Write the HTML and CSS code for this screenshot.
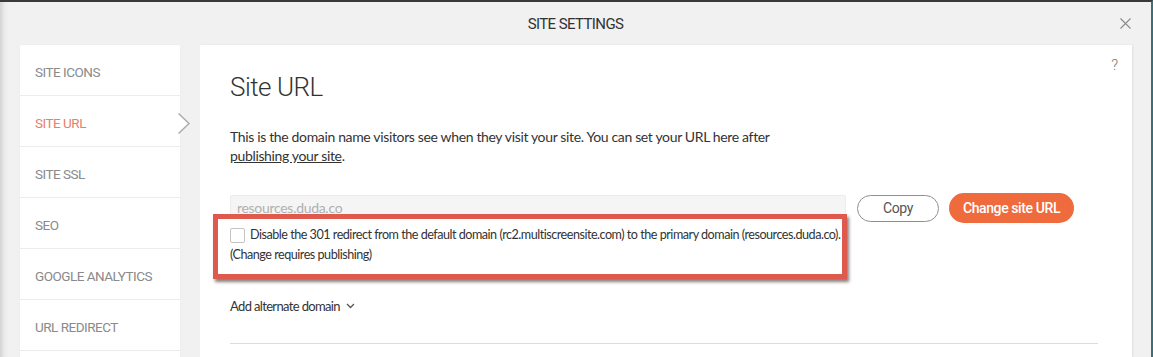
FILE: index.html
```html
<!DOCTYPE html>
<html lang="en">
<head>
<meta charset="utf-8">
<title>Site Settings</title>
<link rel="stylesheet" href="styles.css">
</head>
<body>
<div class="page">
  <div class="dialog">
    <header class="dlg-head">
      <h1 class="dlg-title">SITE SETTINGS</h1>
      <button class="dlg-close" aria-label="Close">
        <svg width="11" height="11" viewBox="0 0 11 11"><path d="M0.5 0.5 L10.5 10.5 M10.5 0.5 L0.5 10.5" stroke="#8a8a8a" stroke-width="1.1" fill="none"/></svg>
      </button>
    </header>
    <div class="dlg-body">
      <nav class="side">
        <div class="side-item">SITE ICONS</div>
        <div class="side-item active">SITE URL
          <svg class="side-arrow" width="14" height="22" viewBox="0 0 14 22"><path d="M0 0 L11 10.5 L0 21 Z" fill="#fff"/><path d="M0.5 0.5 L11 10.5 L0.5 20.5" stroke="#a9a9a9" stroke-width="1.4" fill="none"/></svg>
        </div>
        <div class="side-item">SITE SSL</div>
        <div class="side-item">SEO</div>
        <div class="side-item">GOOGLE ANALYTICS</div>
        <div class="side-item">URL REDIRECT</div>
        <div class="side-item"></div>
      </nav>
      <main class="panel">
        <span class="help">?</span>
        <h2 class="panel-title">Site URL</h2>
        <p class="desc">This is the domain name visitors see when they visit your site. You can set your URL here after<br><a class="desc-link" href="#">publishing your site</a>.</p>
        <div class="url-row">
          <div class="url-input">resources.duda.co</div>
          <button class="btn btn-copy">Copy</button>
          <button class="btn btn-change">Change site URL</button>
        </div>
        <div class="redirect-box">
          <div class="redirect-line"><span class="cb"></span>Disable the 301 redirect from the default domain (rc2.multiscreensite.com) to the primary domain (resources.duda.co).</div>
          <div class="redirect-line">(Change requires publishing)</div>
        </div>
        <div class="alt-domain">Add alternate domain
          <svg class="alt-chev" width="9" height="6" viewBox="0 0 9 6"><path d="M1 1 L4.5 4.5 L8 1" stroke="#555" stroke-width="1.3" fill="none"/></svg>
        </div>
        <hr class="divider">
      </main>
    </div>
  </div>
</div>
</body>
</html>
```

FILE: styles.css
```css
* { box-sizing: border-box; }
html, body { margin: 0; padding: 0; }
body {
  width: 1153px;
  height: 357px;
  overflow: hidden;
  font-family: "Lato", "Open Sans", sans-serif;
  color: #333;
  background: #f1f1f1;
}
.page {
  height: 357px;
  overflow: hidden;
  border-top: 2px solid #3a3a3a;
  border-right: 2px solid #3d6f78;
  background: linear-gradient(to right, #d4d4d4 0, #ececec 5px, #f1f1f1 9px);
}
.dialog { height: 100%; }
.dlg-head {
  height: 43px;
  display: flex;
  align-items: center;
  justify-content: center;
  position: relative;
}
.dlg-title {
  margin: 0;
  font-family: "Roboto", sans-serif;
  font-weight: 400;
  font-size: 15px;
  letter-spacing: -0.6px;
  color: #333;
}
.dlg-close {
  position: absolute;
  right: 20px;
  top: 16px;
  border: 0;
  background: none;
  padding: 0;
  line-height: 0;
}
.dlg-body {
  display: flex;
  gap: 20px;
  padding: 0 19px 0 20px;
  align-items: flex-start;
}
.side {
  width: 160px;
  flex: none;
  background: #fff;
  height: 312px;
  box-shadow: 0 0 2px rgba(0,0,0,0.04);
}
.side-item {
  position: relative;
  height: 51px;
  display: flex;
  align-items: center;
  padding: 3px 0 0 15px;
  border-bottom: 1px solid #ececec;
  font-family: "Roboto", sans-serif;
  font-size: 13.5px;
  letter-spacing: -0.5px;
  color: #8a8a8a;
}
.side-item.active { color: #e5806c; }
.side-arrow {
  position: absolute;
  right: -12px;
  top: 17px;
}
.panel {
  flex: 1;
  position: relative;
  background: #fff;
  height: 312px;
  padding: 26px 30px 0 30px;
  box-shadow: 1px 0 2px rgba(0,0,0,0.08);
}
.help {
  position: absolute;
  right: 14px;
  top: 11px;
  font-family: "Roboto", sans-serif;
  font-weight: 300;
  font-size: 15px;
  color: #777;
}
.panel-title {
  margin: 0;
  font-family: "Roboto", sans-serif;
  font-weight: 300;
  font-size: 26px;
  line-height: 32px;
  letter-spacing: -0.5px;
  color: #333;
}
.desc {
  margin: 24px 0 0 0;
  font-size: 14px;
  line-height: 19px;
  letter-spacing: -0.35px;
  color: #333;
}
.desc-link { color: #333; text-decoration: underline; }
.url-row {
  margin-top: 28px;
  display: flex;
  align-items: center;
  height: 30px;
}
.url-input {
  width: 616px;
  height: 27px;
  background: #f5f5f5;
  border: 1px solid #ececec;
  border-radius: 2px;
  padding: 3px 6px 0;
  font-size: 14px;
  letter-spacing: -0.3px;
  color: #b0b0b0;
}
.btn {
  font-family: "Roboto", sans-serif;
  font-size: 14px;
  letter-spacing: -0.4px;
  border-radius: 15px;
  cursor: pointer;
}
.btn-copy {
  margin-left: 11px;
  width: 82px;
  height: 27px;
  background: #fff;
  border: 1px solid #8f8f8f;
  color: #555;
}
.btn-change {
  margin-left: 10px;
  width: 125px;
  height: 30px;
  background: #ef6a3c;
  border: 0;
  color: #fff;
  font-weight: 500;
}
.redirect-box {
  margin: -9px 0 0 -17px;
  width: 634px;
  border: 5px solid #de5a4c;
  background: #fff;
  padding: 6px 0 9px 12px;
  box-shadow: 2px 3px 3px rgba(40,20,20,0.55);
  position: relative;
}
.redirect-line {
  display: flex;
  align-items: center;
  white-space: nowrap;
  font-size: 12.6px;
  line-height: 20px;
  letter-spacing: -0.49px;
  color: #333;
}
.cb {
  width: 15px;
  height: 15px;
  border: 1px solid #c4c4c4;
  border-radius: 2px;
  margin-right: 5px;
  flex: none;
}
.alt-domain {
  margin-top: 17px;
  display: flex;
  align-items: center;
  gap: 6px;
  font-size: 13px;
  line-height: 20px;
  letter-spacing: -0.65px;
  color: #333;
}
.divider {
  margin: 27px 4px 0 0;
  border: 0;
  border-top: 1px solid #dcdcdc;
}
```
